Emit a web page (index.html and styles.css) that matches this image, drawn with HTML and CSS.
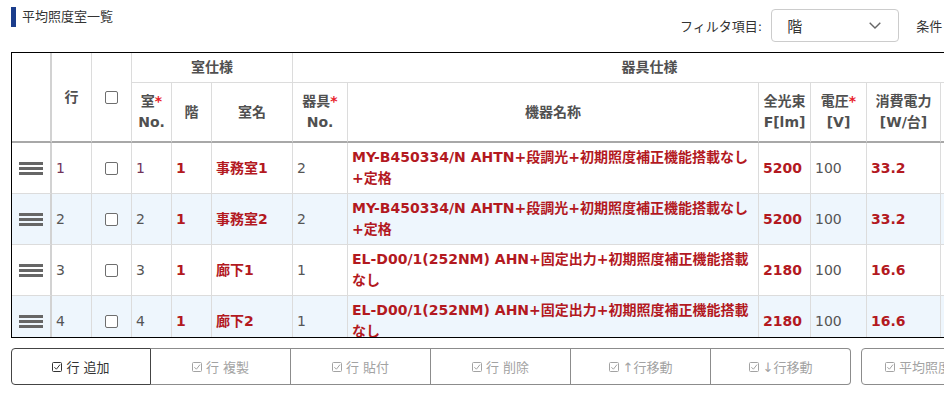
FILE: index.html
```html
<!DOCTYPE html>
<html lang="ja">
<head>
    <meta charset="UTF-8">
    <title>平均照度室一覧</title>
    <link rel="stylesheet" href="styles.css">
</head>
<body>
    <div class="page">
        <div class="toolbar">
            <h1 class="title">平均照度室一覧</h1>
            <div class="filter">
                <span class="filter-label">フィルタ項目:</span>
                <div class="select">
                    <span>階</span>
                    <svg class="chevron" viewBox="0 0 12 7"><path d="M0.7 0.7L6 6L11.3 0.7"/></svg>
                </div>
                <span class="filter-label">条件</span>
            </div>
        </div>

        <div class="grid">
            <table>
                <colgroup>
                    <col class="w40">
                    <col class="w40">
                    <col class="w40">
                    <col class="w40">
                    <col class="w40">
                    <col class="w81">
                    <col class="w55">
                    <col class="w411">
                    <col class="w52">
                    <col class="w56">
                    <col class="w74">
                    <col class="w66">
                    <col class="w100">
                </colgroup>
                <thead>
                    <tr>
                        <th rowspan="2" class="handle-col"></th>
                        <th rowspan="2">行</th>
                        <th rowspan="2"><span class="check"></span></th>
                        <th colspan="3">室仕様</th>
                        <th colspan="6">器具仕様</th>
                        <th>計算結果</th>
                    </tr>
                    <tr>
                        <th>室<span class="req">*</span><br>No.</th>
                        <th>階</th>
                        <th>室名</th>
                        <th>器具<span class="req">*</span><br>No.</th>
                        <th>機器名称</th>
                        <th>全光束<br>F[lm]</th>
                        <th>電圧<span class="req">*</span><br>[V]</th>
                        <th>消費電力<br>[W/台]</th>
                        <th>台数<br>[台]</th>
                        <th>平均照度<br>[lx]</th>
                    </tr>
                </thead>
                <tbody>
                    <tr>
                        <td class="handle-col"><span class="handle"></span></td>
                        <td class="mark">1</td>
                        <td class="center"><span class="check"></span></td>
                        <td class="mark">1</td>
                        <td class="em">1</td>
                        <td class="em">事務室1</td>
                        <td>2</td>
                        <td class="em">MY-B450334/N AHTN+段調光+初期照度補正機能搭載なし+定格</td>
                        <td class="em">5200</td>
                        <td>100</td>
                        <td class="em">33.2</td>
                        <td>4</td>
                        <td>520</td>
                    </tr>
                    <tr>
                        <td class="handle-col"><span class="handle"></span></td>
                        <td>2</td>
                        <td class="center"><span class="check"></span></td>
                        <td>2</td>
                        <td class="em">1</td>
                        <td class="em">事務室2</td>
                        <td>2</td>
                        <td class="em">MY-B450334/N AHTN+段調光+初期照度補正機能搭載なし+定格</td>
                        <td class="em">5200</td>
                        <td>100</td>
                        <td class="em">33.2</td>
                        <td>6</td>
                        <td>540</td>
                    </tr>
                    <tr>
                        <td class="handle-col"><span class="handle"></span></td>
                        <td>3</td>
                        <td class="center"><span class="check"></span></td>
                        <td>3</td>
                        <td class="em">1</td>
                        <td class="em">廊下1</td>
                        <td>1</td>
                        <td class="em">EL-D00/1(252NM) AHN+固定出力+初期照度補正機能搭載なし</td>
                        <td class="em">2180</td>
                        <td>100</td>
                        <td class="em">16.6</td>
                        <td>3</td>
                        <td>150</td>
                    </tr>
                    <tr>
                        <td class="handle-col"><span class="handle"></span></td>
                        <td>4</td>
                        <td class="center"><span class="check"></span></td>
                        <td>4</td>
                        <td class="em">1</td>
                        <td class="em">廊下2</td>
                        <td>1</td>
                        <td class="em">EL-D00/1(252NM) AHN+固定出力+初期照度補正機能搭載なし</td>
                        <td class="em">2180</td>
                        <td>100</td>
                        <td class="em">16.6</td>
                        <td>3</td>
                        <td>150</td>
                    </tr>
                    <tr>
                        <td class="handle-col"><span class="handle"></span></td>
                        <td>5</td>
                        <td class="center"><span class="check"></span></td>
                        <td>5</td>
                        <td class="em">2</td>
                        <td class="em">会議室</td>
                        <td>2</td>
                        <td class="em">MY-B450334/N AHTN+段調光+初期照度補正機能搭載なし+定格</td>
                        <td class="em">5200</td>
                        <td>100</td>
                        <td class="em">33.2</td>
                        <td>4</td>
                        <td>510</td>
                    </tr>
                </tbody>
            </table>
        </div>

        <div class="actions">
            <div class="btn-group">
                <button class="btn primary"><svg class="ico" viewBox="0 0 10 10"><rect x="0.5" y="0.5" width="9" height="9" rx="1"/><path d="M2.4 5.2l2 2L8 2.6"/></svg><span>行 追加</span></button>
                <button class="btn"><svg class="ico" viewBox="0 0 10 10"><rect x="0.5" y="0.5" width="9" height="9" rx="1"/><path d="M2.4 5.2l2 2L8 2.6"/></svg><span>行 複製</span></button>
                <button class="btn"><svg class="ico" viewBox="0 0 10 10"><rect x="0.5" y="0.5" width="9" height="9" rx="1"/><path d="M2.4 5.2l2 2L8 2.6"/></svg><span>行 貼付</span></button>
                <button class="btn"><svg class="ico" viewBox="0 0 10 10"><rect x="0.5" y="0.5" width="9" height="9" rx="1"/><path d="M2.4 5.2l2 2L8 2.6"/></svg><span>行 削除</span></button>
                <button class="btn"><svg class="ico" viewBox="0 0 10 10"><rect x="0.5" y="0.5" width="9" height="9" rx="1"/><path d="M2.4 5.2l2 2L8 2.6"/></svg><span>↑行移動</span></button>
                <button class="btn"><svg class="ico" viewBox="0 0 10 10"><rect x="0.5" y="0.5" width="9" height="9" rx="1"/><path d="M2.4 5.2l2 2L8 2.6"/></svg><span>↓行移動</span></button>
            </div>
            <button class="btn solo"><svg class="ico" viewBox="0 0 10 10"><rect x="0.5" y="0.5" width="9" height="9" rx="1"/><path d="M2.4 5.2l2 2L8 2.6"/></svg><span>平均照度計算</span></button>
        </div>
    </div>
</body>
</html>
```

FILE: styles.css
```css
:root {
    --text-color: #333;
    --head-color: #505050;
    --em-color: #b3191f;
    --line-color: #dcdcdc;
    --stripe-bg: #eef6fd;
    --title-bar: #1b3d8c;
}

* {
    margin: 0;
    padding: 0;
    box-sizing: border-box;
}

html, body {
    overflow: hidden;
}

body {
    font-family: "DejaVu Sans", "Noto Sans CJK JP", sans-serif;
    color: var(--text-color);
    background: #fff;
}

.page {
    width: 1120px;
    padding: 7px 0 0 11px;
}

/* header bar */
.toolbar {
    display: flex;
    align-items: flex-start;
    height: 45px;
}

.title {
    flex: 0 0 669px;
    display: flex;
    align-items: center;
    font-size: 13px;
    font-weight: normal;
    line-height: 20px;
}

.title::before {
    content: "";
    width: 5px;
    height: 20px;
    margin-right: 6px;
    background: var(--title-bar);
}

.filter {
    display: flex;
    align-items: center;
    margin-top: 2px;
    font-size: 13px;
}

.select {
    display: flex;
    align-items: center;
    justify-content: space-between;
    width: 128px;
    height: 33px;
    margin: 0 17px 0 9px;
    padding: 0 17px 0 15px;
    border: 1px solid #ccc;
    border-radius: 4px;
    font-size: 15px;
}

.chevron {
    width: 12px;
    height: 7px;
    fill: none;
    stroke: #666;
    stroke-width: 1.4;
}

/* grid */
.grid {
    width: 1100px;
    height: 286px;
    border: 1px solid #000;
    overflow: hidden;
}

.grid table {
    table-layout: fixed;
    border-collapse: separate;
    border-spacing: 0;
    width: 1095px;
    font-size: 14px;
    line-height: 21px;
}

.w40 { width: 40px; }
.w52 { width: 52px; }
.w55 { width: 55px; }
.w56 { width: 56px; }
.w66 { width: 66px; }
.w74 { width: 74px; }
.w81 { width: 81px; }
.w100 { width: 100px; }
.w411 { width: 411px; }

th, td {
    padding: 4px;
    border-right: 1px solid var(--line-color);
    border-bottom: 1px solid var(--line-color);
    vertical-align: middle;
    text-align: left;
    font-weight: normal;
}

th {
    color: var(--head-color);
    font-weight: bold;
    text-align: center;
}

thead tr:last-child th {
    padding: 8px 4px;
}

thead tr:last-child th,
thead th[rowspan] {
    border-bottom: 2px solid #a8a8a8;
}

.handle-col {
    border-right: 2px solid #d2d2d2;
}

.req {
    color: #e8202a;
}

tbody td {
    color: #555;
}

tbody tr:nth-child(even) td {
    background: var(--stripe-bg);
}

td.em {
    color: var(--em-color);
    font-weight: bold;
}

td.mark {
    color: #70335a;
}

.center {
    text-align: center;
}

.handle {
    display: block;
    width: 24px;
    height: 13px;
    margin: 0 auto;
    background: linear-gradient(#666 0 3px, transparent 3px 5px, #666 5px 8px, transparent 8px 10px, #666 10px 13px);
}

.check {
    display: inline-block;
    width: 13px;
    height: 13px;
    vertical-align: middle;
    border: 1px solid #6e6e6e;
    border-radius: 2px;
    background: #fff;
}

/* buttons */
.actions {
    display: flex;
    margin-top: 10px;
}

.btn-group {
    display: flex;
}

.btn {
    display: flex;
    align-items: center;
    justify-content: center;
    gap: 4px;
    width: 140px;
    height: 37px;
    font-family: inherit;
    font-size: 13px;
    color: #a3a3a3;
    background: #fff;
    border: 1px solid #8c8c8c;
    border-left: none;
}

.btn.primary {
    color: #333;
    border: 1px solid #444;
    border-radius: 4px 0 0 4px;
}

.btn-group .btn:last-child {
    border-radius: 0 4px 4px 0;
}

.btn.solo {
    margin-left: 10px;
    border-left: 1px solid #8c8c8c;
    border-radius: 4px;
}

.ico {
    flex: 0 0 10px;
    width: 10px;
    height: 10px;
    fill: none;
    stroke: currentColor;
    stroke-width: 1;
}
```
